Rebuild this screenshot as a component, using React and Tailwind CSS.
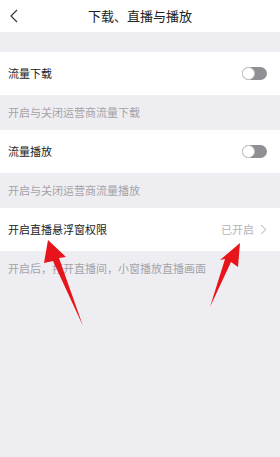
import React from 'react';

function Toggle() {
    return (
        <div className="relative w-[25px] h-[13px] rounded-full bg-[#8f8f94]">
            <div className="absolute left-0 top-0 w-[13px] h-[13px] rounded-full bg-white border border-[#c8c8cc]" />
        </div>
    );
}

function Row({ label, right }) {
    return (
        <div className="flex items-center justify-between h-[43px] bg-white pl-[8px] pr-[13px]">
            <span className="text-[11px] text-[#222]">{label}</span>
            {right}
        </div>
    );
}

function Desc({ children }) {
    return (
        <div className="flex items-center h-[35px] pl-[8px] text-[11px] text-[#a3a3a8]">{children}</div>
    );
}

export default function App() {
    return (
        <div className="relative w-[280px] h-[457px] bg-[#eeeef2] overflow-hidden" style={{ fontFamily: "'Noto Sans CJK SC', 'Noto Sans', sans-serif" }}>
            {/* Header */}
            <div className="relative flex items-center justify-center h-[32px] bg-white">
                <svg className="absolute left-[9px] top-[9px]" width="10" height="14" viewBox="0 0 10 14">
                    <path d="M8 1 L2 7 L8 13" fill="none" stroke="#333" strokeWidth="1.2" />
                </svg>
                <span className="text-[13px] text-[#222]">下载、直播与播放</span>
            </div>

            <div className="h-[20px]" />

            <Row label="流量下载" right={<Toggle />} />
            <Desc>开启与关闭运营商流量下载</Desc>
            <Row label="流量播放" right={<Toggle />} />
            <Desc>开启与关闭运营商流量播放</Desc>
            <Row
                label="开启直播悬浮窗权限"
                right={
                    <div className="flex items-center gap-[6px]">
                        <span className="text-[11px] text-[#b4b4b8]">已开启</span>
                        <svg width="7" height="11" viewBox="0 0 7 11">
                            <path d="M1 1 L6 5.5 L1 10" fill="none" stroke="#b4b4b8" strokeWidth="1" />
                        </svg>
                    </div>
                }
            />
            <Desc>开启后，打开直播间，小窗播放直播画面</Desc>

            {/* Red annotation arrows */}
            <svg className="absolute inset-0 pointer-events-none" width="280" height="457" viewBox="0 0 280 457">
                <polygon points="48,240 66,257 59,258 83,326 53,261 44,263" fill="#e8141b" />
                <polygon points="240,243 238,267 231,262 210,307 225,259 220,260" fill="#e8141b" />
            </svg>
        </div>
    );
}
